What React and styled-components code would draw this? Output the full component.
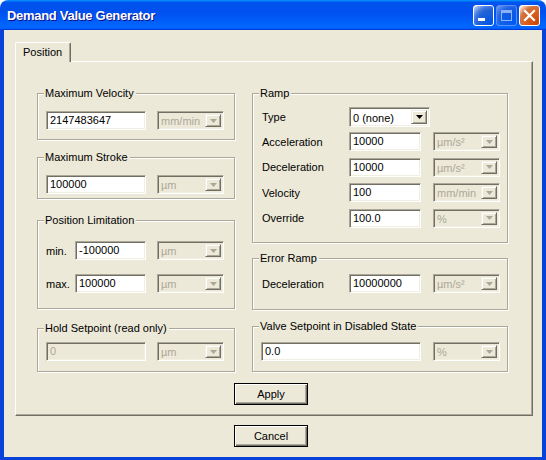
import React from 'react'
import styled, { createGlobalStyle } from 'styled-components'

const GlobalStyle = createGlobalStyle`
  body {
    margin: 0;
    background: #ffffff;
    font-family: "Liberation Sans", Arial, sans-serif;
    font-size: 11px;
    color: #000;
  }
`

const Window = styled.div`
  width: 546px;
  height: 460px;
  display: flex;
  flex-direction: column;
  border-radius: 8px 8px 0 0;
  overflow: hidden;
`

const TitleBar = styled.div`
  height: 30px;
  flex: none;
  box-sizing: border-box;
  display: flex;
  align-items: center;
  padding: 0 6px 0 7px;
  background: linear-gradient(to bottom, #0997ff 0%, #0053ee 8%, #0050ee 40%, #0066ff 88%, #0066ff 93%, #005bff 95%, #003dd7 96%, #003dd7 100%);
`

const Title = styled.div`
  font-family: "Liberation Sans", Arial, sans-serif;
  font-weight: bold;
  font-size: 13px;
  letter-spacing: -0.3px;
  color: #fff;
  text-shadow: 1px 1px 0 #0f1089;
`

const TitleButtons = styled.div`
  margin-left: auto;
  display: flex;
  gap: 2px;
`

const CtrlButton = styled.div`
  width: 21px;
  height: 21px;
  box-sizing: border-box;
  border: 1px solid ${p => (p.$disabled ? '#a9bdf0' : '#fff')};
  border-radius: 3px;
  display: flex;
  align-items: center;
  justify-content: center;
  background: ${p => (p.$close
    ? 'radial-gradient(circle at 90% 90%, #cc4600 0%, #dc6527 55%, #cd7546 70%, #ffccb2 90%, #fff 100%)'
    : 'radial-gradient(circle at 90% 90%, #0054e9 0%, #2263d5 55%, #4479e4 70%, #a3bbec 90%, #fff 100%)')};
  opacity: ${p => (p.$disabled ? 0.55 : 1)};
`

const Client = styled.div`
  flex: 1;
  display: flex;
  flex-direction: column;
  background: #ece9d8;
  border: 4px solid #0842d8;
  border-top: none;
  border-bottom-width: 3px;
  padding: 12px 9px 10px 11px;
`

const TabRow = styled.div`
  height: 19px;
  display: flex;
`

const Tab = styled.div`
  position: relative;
  z-index: 1;
  height: 20px;
  box-sizing: border-box;
  padding: 3px 8px 0 7px;
  background: #ece9d8;
  border-top: 1px solid #fff;
  border-left: 1px solid #fff;
  border-right: 1px solid #716f64;
  border-radius: 2px 2px 0 0;
  box-shadow: inset -1px 0 0 #aca899;
`

const Panel = styled.div`
  height: 355px;
  box-sizing: border-box;
  display: flex;
  flex-direction: column;
  padding: 31px 24px 0 21px;
  border-top: 1px solid #fff;
  border-left: 1px solid #fff;
  border-right: 1px solid #716f64;
  border-bottom: 1px solid #716f64;
  box-shadow: inset -1px -1px 0 #aca899;
`

const Columns = styled.div`
  display: grid;
  grid-template-columns: 198px 256px;
  column-gap: 17px;
  align-items: start;
`

const Column = styled.div`
  display: flex;
  flex-direction: column;
`

const Group = styled.div`
  position: relative;
  box-sizing: border-box;
  height: ${p => p.$h}px;
  margin-top: ${p => p.$mt || 0}px;
  padding: ${p => p.$pt}px 0 0 ${p => p.$pl || 8}px;
  border: 1px solid #aca899;
  box-shadow: inset 1px 1px 0 #fff, 1px 1px 0 #fff;
  display: flex;
  flex-direction: column;
  gap: ${p => p.$gap || 0}px;
`

const Legend = styled.span`
  position: absolute;
  top: -7px;
  left: 6px;
  padding: 0 2px 0 1px;
  line-height: 13px;
  background: #ece9d8;
  color: ${p => (p.$disabled ? '#000' : '#000')};
`

const Row = styled.div`
  display: flex;
  align-items: center;
  gap: ${p => p.$gap || 11}px;
  margin-bottom: ${p => p.$mb || 0}px;
`

const Label = styled.span`
  width: ${p => p.$w}px;
  flex: none;
`

const sunken = `
  box-sizing: border-box;
  border: 1px solid;
  border-color: #aca899 #fff #fff #aca899;
  box-shadow: inset 1px 1px 0 #716f64, inset -1px -1px 0 #f1efe2;
`

const TextBox = styled.div`
  ${sunken}
  width: ${p => p.$w}px;
  height: 19px;
  flex: none;
  padding: 0 3px;
  line-height: 17px;
  background: ${p => (p.$disabled ? '#ece9d8' : '#fff')};
  color: ${p => (p.$disabled ? '#aca899' : '#000')};
  white-space: nowrap;
`

const Combo = styled.div`
  ${sunken}
  width: ${p => p.$w || 67}px;
  height: ${p => p.$h || 19}px;
  flex: none;
  display: flex;
  align-items: stretch;
  padding: 2px 2px 2px 3px;
  background: ${p => (p.$disabled ? '#ece9d8' : '#fff')};
  color: ${p => (p.$disabled ? '#aca899' : '#000')};
`

const ComboText = styled.span`
  flex: 1;
  line-height: ${p => (p.$tall ? 16 : 15)}px;
  white-space: nowrap;
  overflow: hidden;
`

const DropButton = styled.div`
  width: 16px;
  flex: none;
  box-sizing: border-box;
  display: flex;
  align-items: center;
  justify-content: center;
  background: #ece9d8;
  border: 1px solid;
  border-color: #f1efe2 #716f64 #716f64 #f1efe2;
  box-shadow: inset 1px 1px 0 #fff, inset -1px -1px 0 #aca899;
`

const ButtonRow = styled.div`
  display: flex;
  justify-content: center;
  padding-right: ${p => p.$shift}px;
  margin-top: ${p => p.$mt}px;
`

const Button = styled.button`
  width: 74px;
  height: 22px;
  padding: 0;
  font-family: "Liberation Sans", Arial, sans-serif;
  font-size: 11px;
  color: #000;
  background: #ece9d8;
  border: 1px solid #000;
  box-shadow: inset 1px 1px 0 #fff, inset -1px -1px 0 #716f64, inset -2px -2px 0 #aca899;
`

const Arrow = ({ disabled }) => (
  <svg width="7" height="4" viewBox="0 0 7 4">
    <polygon points="0,0 7,0 3.5,4" fill={disabled ? '#aca899' : '#000'} />
  </svg>
)

const Select = ({ value, disabled = true, w, h }) => (
  <Combo $disabled={disabled} $w={w} $h={h}>
    <ComboText $tall={!!h}>{value}</ComboText>
    <DropButton>
      <Arrow disabled={disabled} />
    </DropButton>
  </Combo>
)

const RampField = ({ label, value, unit }) => (
  <Row $gap={12}>
    <Label $w={75}>{label}</Label>
    <TextBox $w={72}>{value}</TextBox>
    <Select value={unit} />
  </Row>
)

const App = () => {
  return (
    <>
      <GlobalStyle />
      <Window>
        <TitleBar>
          <Title>Demand Value Generator</Title>
          <TitleButtons>
            <CtrlButton>
              <svg width="19" height="19" viewBox="0 0 19 19">
                <rect x="4" y="12" width="7" height="3" fill="#fff" />
              </svg>
            </CtrlButton>
            <CtrlButton $disabled>
              <svg width="19" height="19" viewBox="0 0 19 19">
                <rect x="4.5" y="4.5" width="10" height="10" fill="none" stroke="#fff" />
                <rect x="4" y="4" width="11" height="3" fill="#fff" />
              </svg>
            </CtrlButton>
            <CtrlButton $close>
              <svg width="19" height="19" viewBox="0 0 19 19">
                <path d="M5 5 L14 14 M14 5 L5 14" stroke="#fff" strokeWidth="2.2" strokeLinecap="square" />
              </svg>
            </CtrlButton>
          </TitleButtons>
        </TitleBar>

        <Client>
          <TabRow>
            <Tab>Position</Tab>
          </TabRow>
          <Panel>
            <Columns>
              <Column>
                <Group $h={47} $pt={17}>
                  <Legend>Maximum Velocity</Legend>
                  <Row>
                    <TextBox $w={100}>2147483647</TextBox>
                    <Select value="mm/min" />
                  </Row>
                </Group>
                <Group $h={42} $mt={17} $pt={17}>
                  <Legend>Maximum Stroke</Legend>
                  <Row>
                    <TextBox $w={100}>100000</TextBox>
                    <Select value="µm" />
                  </Row>
                </Group>
                <Group $h={89} $mt={21} $pt={20} $gap={14}>
                  <Legend>Position Limitation</Legend>
                  <Row>
                    <Label $w={18}>min.</Label>
                    <TextBox $w={71}>-100000</TextBox>
                    <Select value="µm" />
                  </Row>
                  <Row>
                    <Label $w={18}>max.</Label>
                    <TextBox $w={71}>100000</TextBox>
                    <Select value="µm" />
                  </Row>
                </Group>
                <Group $h={44} $mt={19} $pt={13}>
                  <Legend>Hold Setpoint (read only)</Legend>
                  <Row>
                    <TextBox $w={100} $disabled>0</TextBox>
                    <Select value="µm" />
                  </Row>
                </Group>
              </Column>

              <Column>
                <Group $h={150} $pt={13} $pl={9} $gap={6.5}>
                  <Legend>Ramp</Legend>
                  <Row $gap={12} $mb={-1.5}>
                    <Label $w={75}>Type</Label>
                    <Select value="0 (none)" disabled={false} w={81} h={20} />
                  </Row>
                  <RampField label="Acceleration" value="10000" unit="µm/s²" />
                  <RampField label="Deceleration" value="10000" unit="µm/s²" />
                  <RampField label="Velocity" value="100" unit="mm/min" />
                  <RampField label="Override" value="100.0" unit="%" />
                </Group>
                <Group $h={52} $mt={15} $pt={15} $pl={9}>
                  <Legend>Error Ramp</Legend>
                  <RampField label="Deceleration" value="10000000" unit="µm/s²" />
                </Group>
                <Group $h={46} $mt={16} $pt={15}>
                  <Legend>Valve Setpoint in Disabled State</Legend>
                  <Row $gap={12}>
                    <TextBox $w={160}>0.0</TextBox>
                    <Select value="%" />
                  </Row>
                </Group>
              </Column>
            </Columns>
            <ButtonRow $mt={11} $shift={3}>
              <Button>Apply</Button>
            </ButtonRow>
          </Panel>
          <ButtonRow $mt={9} $shift={6}>
            <Button>Cancel</Button>
          </ButtonRow>
        </Client>
      </Window>
    </>
  )
}

export default App
